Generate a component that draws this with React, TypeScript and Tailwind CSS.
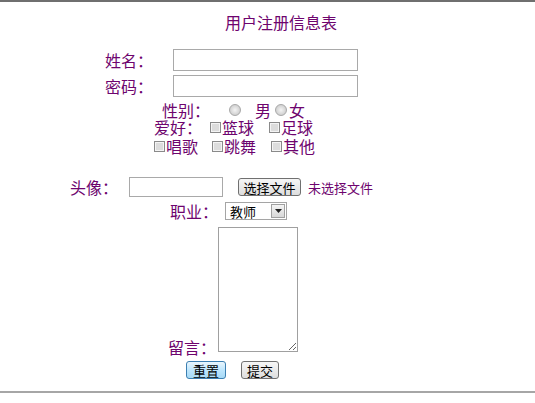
import React from 'react';

const purple = 'text-[#6e046e]';

function Radio() {
  return (
    <span className="inline-block w-[12px] h-[12px] rounded-full border border-[#a8a8a8] bg-[radial-gradient(circle_at_50%_50%,#f4f4f4_0%,#d6d6d6_60%,#c4c4c4_100%)]" />
  );
}

function Check() {
  return (
    <span className="inline-block w-[11px] h-[11px] border border-[#8a8a8a] bg-[#dcdcdc] shadow-[inset_0_0_0_1px_#f4f4f4]" />
  );
}

export default function App() {
  return (
    <div
      className={`w-[535px] h-[403px] bg-white overflow-hidden flex flex-col ${purple}`}
      style={{ fontFamily: '"Noto Sans CJK SC", "Noto Sans", sans-serif' }}
    >
      {/* top rule */}
      <div className="h-[2px] bg-[#6f6f6f]" />

      {/* title */}
      <div className="mt-[12px] h-[16px] pl-[225px] flex items-center text-[16px] leading-none">用户注册信息表</div>

      {/* name */}
      <div className="mt-[19px] h-[22px] pl-[105px] flex items-center text-[16px] leading-none">
        <span className="w-[48px]">姓名：</span>
        <input type="text" className="ml-[20px] w-[185px] h-[22px] border border-[#a9a9a9] bg-white outline-none" />
      </div>

      {/* password */}
      <div className="mt-[4px] h-[22px] pl-[105px] flex items-center text-[16px] leading-none">
        <span className="w-[48px]">密码：</span>
        <input type="password" className="ml-[20px] w-[185px] h-[22px] border border-[#a9a9a9] bg-white outline-none" />
      </div>

      {/* sex */}
      <div className="mt-[5px] h-[16px] pl-[162px] flex items-center text-[16px] leading-none">
        <span className="w-[48px]">性别：</span>
        <span className="ml-[19px] flex"><Radio /></span>
        <span className="ml-[14px]">男</span>
        <span className="ml-[4px] flex"><Radio /></span>
        <span className="ml-[2px]">女</span>
      </div>

      {/* hobby */}
      <div className="h-[18px] pl-[154px] flex items-center text-[16px] leading-none">
        <span className="w-[48px]">爱好：</span>
        <span className="ml-[8px] flex"><Check /></span>
        <span className="ml-[1px]">篮球</span>
        <span className="ml-[15px] flex"><Check /></span>
        <span className="ml-[1px]">足球</span>
      </div>
      <div className="h-[20px] pl-[154px] flex items-center text-[16px] leading-none">
        <span className="flex"><Check /></span>
        <span className="ml-[1px]">唱歌</span>
        <span className="ml-[14px] flex"><Check /></span>
        <span className="ml-[1px]">跳舞</span>
        <span className="ml-[15px] flex"><Check /></span>
        <span className="ml-[1px]">其他</span>
      </div>

      {/* avatar */}
      <div className="mt-[21px] h-[20px] pl-[70px] flex items-center text-[16px] leading-none">
        <span className="w-[48px]">头像：</span>
        <div className="ml-[11px] w-[94px] h-[20px] border border-[#a9a9a9] bg-white" />
        <button className="ml-[15px] w-[63px] h-[18px] rounded-[3px] border border-[#707070] bg-[linear-gradient(#f6f6f6,#dedede)] text-black text-[13px] leading-none flex items-center justify-center">
          选择文件
        </button>
        <span className="ml-[7px] text-[13px]">未选择文件</span>
      </div>

      {/* job */}
      <div className="mt-[5px] h-[18px] pl-[170px] flex items-center text-[16px] leading-none">
        <span className="w-[48px]">职业：</span>
        <div className="ml-[7px] w-[62px] h-[18px] border border-[#a5a5a5] bg-white flex items-center justify-between pl-[4px] pr-[1px]">
          <span className="text-black text-[13px] leading-none">教师</span>
          <span className="w-[14px] h-[14px] border border-[#a0a0a0] bg-[linear-gradient(#f4f4f4,#d8d8d8)] flex items-center justify-center">
            <svg width="7" height="4" viewBox="0 0 7 4"><path d="M0 0h7L3.5 4z" fill="#222" /></svg>
          </span>
        </div>
      </div>

      {/* message */}
      <div className="mt-[7px] h-[125px] pl-[168px] flex items-end text-[16px] leading-none">
        <span className="w-[48px] mb-[-3px]">留言：</span>
        <textarea className="ml-[2px] w-[80px] h-[125px] border border-[#a0a0a0] bg-white outline-none resize" />
      </div>

      {/* actions */}
      <div className="mt-[9px] h-[18px] pl-[186px] flex items-center">
        <button className="w-[40px] h-[18px] rounded-[3px] border border-[#3c7fb1] bg-[linear-gradient(#eaf6fd,#bee6fd_50%,#a7d9f5)] text-black text-[13px] leading-none flex items-center justify-center">
          重置
        </button>
        <button className="ml-[15px] w-[38px] h-[18px] rounded-[3px] border border-[#707070] bg-[linear-gradient(#f6f6f6,#dedede)] text-black text-[13px] leading-none flex items-center justify-center">
          提交
        </button>
      </div>

      {/* bottom rule */}
      <div className="mt-[12px] h-[2px] bg-[#a6a6a6]" />
    </div>
  );
}
